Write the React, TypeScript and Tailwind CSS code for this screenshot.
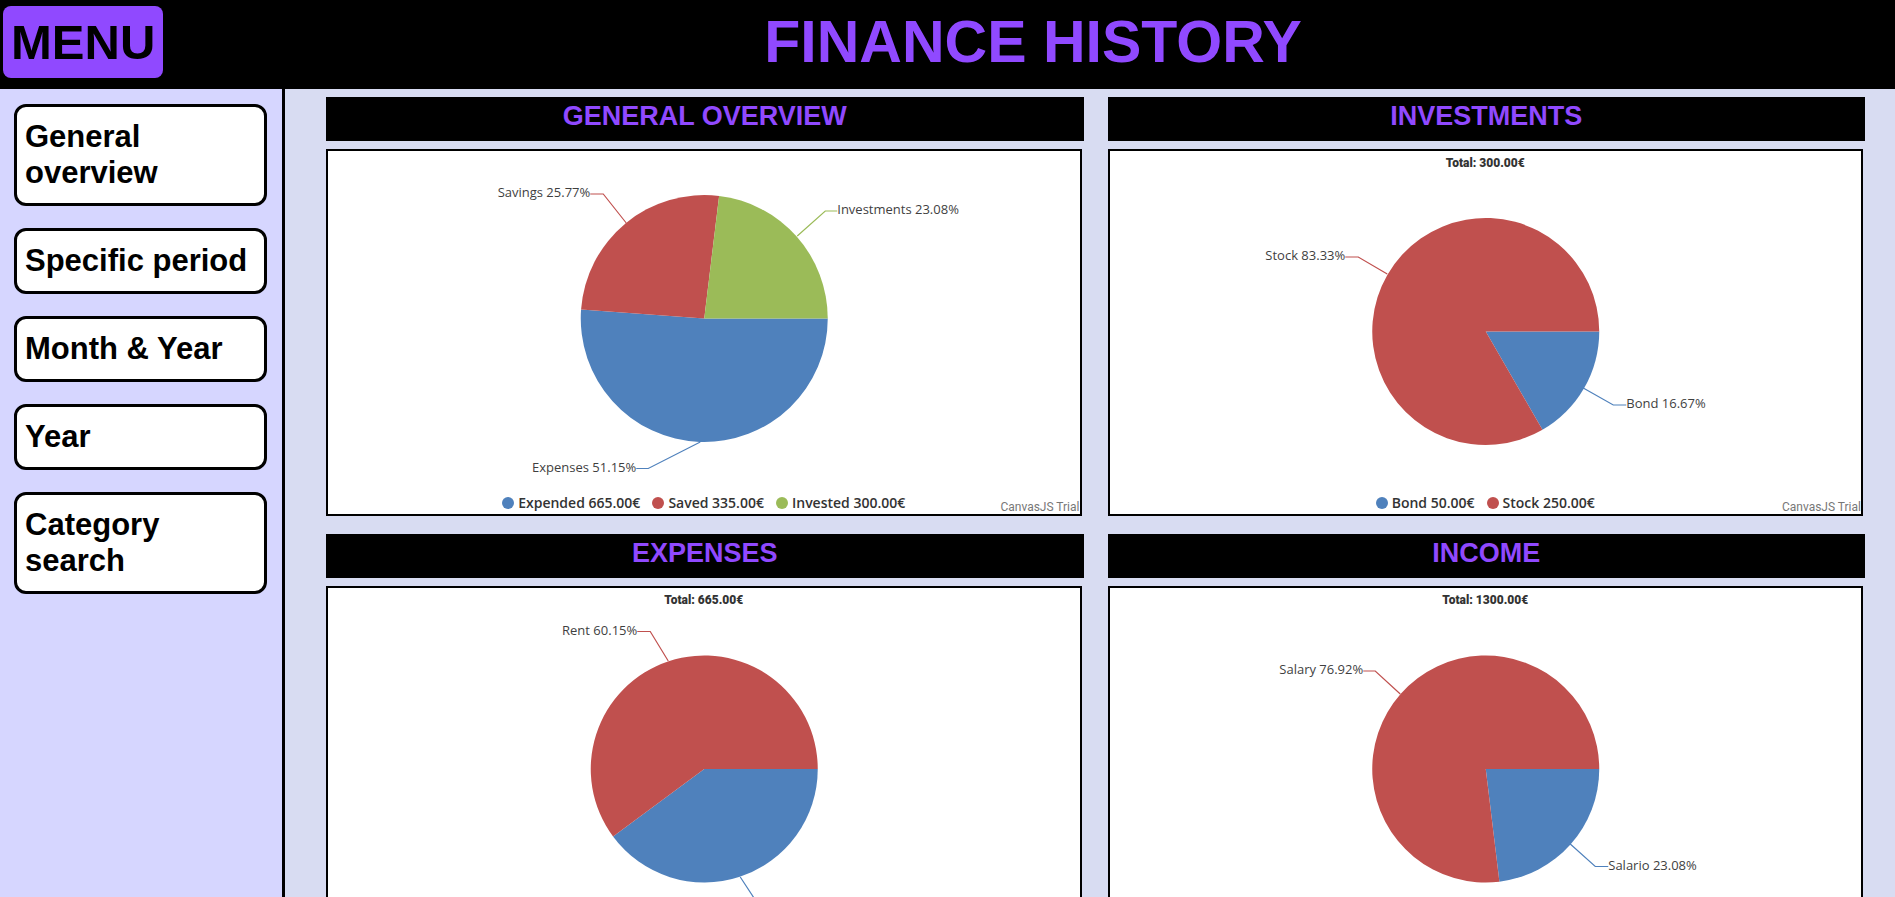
type Point = [number, number];

interface Slice {
  color: string;
  percent: number;
  label?: string;
  side: "left" | "right";
  /** pie edge, elbow, label end */
  leader: [Point, Point, Point];
}

interface LegendEntry {
  color: string;
  text: string;
}

interface Chart {
  heading: string;
  total?: string;
  center: Point;
  radius: number;
  slices: Slice[];
  legend: LegendEntry[];
}

const BLUE = "#4f81bc";
const RED = "#c0504e";
const GREEN = "#9bbb58";

const charts: Chart[] = [
  {
    heading: "GENERAL OVERVIEW",
    center: [376, 167.5],
    radius: 123.5,
    slices: [
      { color: BLUE, percent: 51.15, label: "Expenses 51.15%", side: "left", leader: [[372, 291], [320, 317.5], [308, 317.5]] },
      { color: RED, percent: 25.77, label: "Savings 25.77%", side: "left", leader: [[298, 72], [275, 43], [262, 43]] },
      { color: GREEN, percent: 23.08, label: "Investments 23.08%", side: "right", leader: [[469, 85], [497, 60], [509, 60]] },
    ],
    legend: [
      { color: BLUE, text: "Expended 665.00€" },
      { color: RED, text: "Saved 335.00€" },
      { color: GREEN, text: "Invested 300.00€" },
    ],
  },
  {
    heading: "INVESTMENTS",
    total: "Total: 300.00€",
    center: [375.5, 180.5],
    radius: 113.5,
    slices: [
      { color: BLUE, percent: 16.67, label: "Bond 16.67%", side: "right", leader: [[473, 237], [503, 254], [516, 254]] },
      { color: RED, percent: 83.33, label: "Stock 83.33%", side: "left", leader: [[277, 123], [248, 106], [235, 106]] },
    ],
    legend: [
      { color: BLUE, text: "Bond 50.00€" },
      { color: RED, text: "Stock 250.00€" },
    ],
  },
  {
    heading: "EXPENSES",
    total: "Total: 665.00€",
    center: [376, 181],
    radius: 113.5,
    slices: [
      { color: BLUE, percent: 39.85, side: "right", leader: [[412, 289], [431, 318], [444, 318]] },
      { color: RED, percent: 60.15, label: "Rent 60.15%", side: "left", leader: [[340, 73], [322, 43.5], [309, 43.5]] },
    ],
    legend: [],
  },
  {
    heading: "INCOME",
    total: "Total: 1300.00€",
    center: [375.5, 181],
    radius: 113.5,
    slices: [
      { color: BLUE, percent: 23.08, label: "Salario 23.08%", side: "right", leader: [[460, 256], [485, 278.5], [498, 278.5]] },
      { color: RED, percent: 76.92, label: "Salary 76.92%", side: "left", leader: [[290, 106], [265, 83], [253, 83]] },
    ],
    legend: [],
  },
];

const menuItems = ["General overview", "Specific period", "Month & Year", "Year", "Category search"];

function slicePath([cx, cy]: Point, r: number, from: number, to: number) {
  const at = (percent: number) => {
    const a = (percent / 100) * Math.PI * 2;
    return `${cx + r * Math.cos(a)} ${cy + r * Math.sin(a)}`;
  };
  return `M${cx} ${cy} L${at(from)} A${r} ${r} 0 ${to - from > 50 ? 1 : 0} 1 ${at(to)} Z`;
}

function Pie({ chart }: { chart: Chart }) {
  let start = 0;
  return (
    <svg
      viewBox="0 0 751 363"
      className="block h-[363px] w-full"
      role="img"
      aria-label={chart.heading}
    >
      {chart.slices.map((slice) => {
        const from = start;
        start += slice.percent;
        const [, , end] = slice.leader;
        return (
          <g key={slice.color}>
            <path d={slicePath(chart.center, chart.radius, from, start)} fill={slice.color} />
            <polyline
              points={slice.leader.map((p) => p.join(",")).join(" ")}
              fill="none"
              stroke={slice.color}
              strokeWidth="1.2"
            />
            {slice.label && (
              <text
                x={end[0]}
                y={end[1] + 3}
                textAnchor={slice.side === "left" ? "end" : "start"}
                className="fill-[#3f3f3f] font-['Open_Sans','Noto_Sans',sans-serif] text-[13px]"
              >
                {slice.label}
              </text>
            )}
          </g>
        );
      })}
    </svg>
  );
}

function ChartPanel({ chart }: { chart: Chart }) {
  return (
    <section className="flex flex-col gap-2">
      <h2 className="h-11 bg-black text-center text-[27px] leading-[38px] font-bold text-[#9049ff]">
        {chart.heading}
      </h2>
      <div className="relative mr-[2px] border-2 border-black bg-white">
        <Pie chart={chart} />
        {chart.total && (
          <p className="absolute inset-x-0 top-0 text-center font-['Roboto',sans-serif] text-xs leading-6 font-black text-[#333]">
            {chart.total}
          </p>
        )}
        {chart.legend.length > 0 && (
          <>
            <ul className="absolute inset-x-0 bottom-px flex justify-center gap-3">
              {chart.legend.map((entry) => (
                <li
                  key={entry.text}
                  className="flex items-center gap-1 font-['Open_Sans','Noto_Sans',sans-serif] text-sm leading-5 font-semibold text-[#333]"
                >
                  <svg viewBox="0 0 12 12" className="size-3">
                    <circle cx="6" cy="6" r="6" fill={entry.color} />
                  </svg>
                  {entry.text}
                </li>
              ))}
            </ul>
            <a
              href="#trial"
              className="absolute right-0 bottom-0 font-['Roboto',sans-serif] text-xs leading-[14px] text-[#777]"
            >
              CanvasJS Trial
            </a>
          </>
        )}
      </div>
    </section>
  );
}

export default function App() {
  return (
    <div className="flex h-screen flex-col bg-[#d8dcf2] font-['Liberation_Sans',Arial,sans-serif]">
      <header className="flex h-[89px] shrink-0 items-start gap-2 bg-black pt-[6px] pl-[3px]">
        <button
          type="button"
          className="h-[72px] rounded-lg bg-[#9049ff] px-2 text-[49px] leading-[70px] font-bold text-black"
        >
          MENU
        </button>
        <h1 className="flex-1 text-center text-[59px] leading-[72px] font-bold text-[#9049ff]">
          FINANCE HISTORY
        </h1>
      </header>
      <div className="flex min-h-0 flex-1">
        <nav className="flex w-[285px] shrink-0 flex-col gap-[22px] border-r-3 border-black bg-[#d6d6ff] pt-[15px] pr-[15px] pl-[14px]">
          {menuItems.map((item) => (
            <button
              key={item}
              type="button"
              className="rounded-xl border-3 border-black bg-white px-2 py-3 text-left text-[31px] leading-9 font-bold text-black"
            >
              {item}
            </button>
          ))}
        </nav>
        <main className="grid flex-1 grid-cols-2 content-start gap-x-6 gap-y-[18px] overflow-y-auto pt-2 pr-[30px] pl-[41px] [scrollbar-width:none]">
          {charts.map((chart) => (
            <ChartPanel key={chart.heading} chart={chart} />
          ))}
        </main>
      </div>
    </div>
  );
}
